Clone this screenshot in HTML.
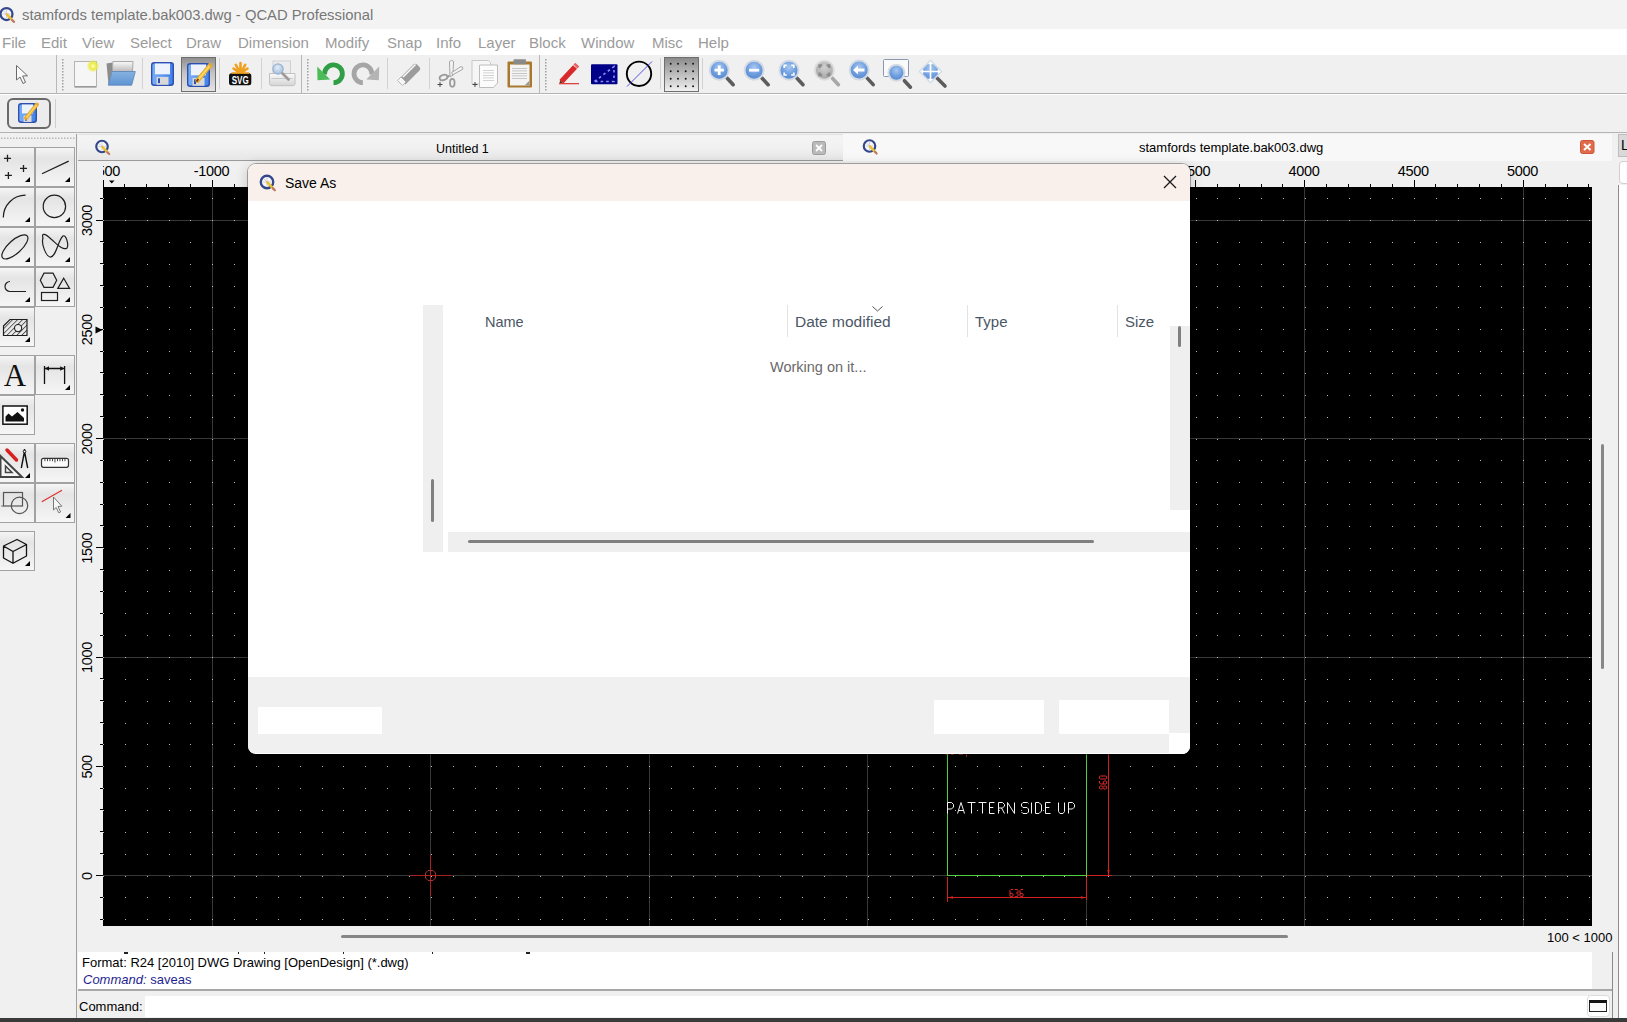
<!DOCTYPE html><html><head><meta charset="utf-8"><style>
*{margin:0;padding:0;box-sizing:border-box}
html,body{width:1627px;height:1022px;overflow:hidden;background:#f0f0f0;font-family:"Liberation Sans",sans-serif;position:relative}
.a{position:absolute}
.t{position:absolute;white-space:nowrap;line-height:1}
</style></head><body>

<div class="a" style="left:0;top:0;width:1627px;height:29px;background:#f3f3f3"></div>
<div class="t" style="left:22px;top:8px;font-size:14.8px;color:#777">stamfords template.bak003.dwg - QCAD Professional</div>
<div class="a" style="left:0;top:29px;width:1627px;height:26px;background:#fff"></div>
<div class="t" style="left:2px;top:35px;font-size:15px;color:#9b9b9b">File</div>
<div class="t" style="left:41px;top:35px;font-size:15px;color:#9b9b9b">Edit</div>
<div class="t" style="left:82px;top:35px;font-size:15px;color:#9b9b9b">View</div>
<div class="t" style="left:130px;top:35px;font-size:15px;color:#9b9b9b">Select</div>
<div class="t" style="left:186px;top:35px;font-size:15px;color:#9b9b9b">Draw</div>
<div class="t" style="left:238px;top:35px;font-size:15px;color:#9b9b9b">Dimension</div>
<div class="t" style="left:325px;top:35px;font-size:15px;color:#9b9b9b">Modify</div>
<div class="t" style="left:387px;top:35px;font-size:15px;color:#9b9b9b">Snap</div>
<div class="t" style="left:436px;top:35px;font-size:15px;color:#9b9b9b">Info</div>
<div class="t" style="left:478px;top:35px;font-size:15px;color:#9b9b9b">Layer</div>
<div class="t" style="left:529px;top:35px;font-size:15px;color:#9b9b9b">Block</div>
<div class="t" style="left:581px;top:35px;font-size:15px;color:#9b9b9b">Window</div>
<div class="t" style="left:652px;top:35px;font-size:15px;color:#9b9b9b">Misc</div>
<div class="t" style="left:698px;top:35px;font-size:15px;color:#9b9b9b">Help</div>
<div class="a" style="left:0;top:55px;width:1627px;height:39px;background:#f0f0f0;border-bottom:1px solid #b4b4b4"></div>
<div class="a" style="left:0;top:94px;width:1627px;height:39px;background:#f0f0f0;border-top:1px solid #fff;border-bottom:1px solid #b4b4b4"></div>
<svg width="1000" height="80" viewBox="0 54 1000 80" style="position:absolute;left:0;top:54px"><defs><linearGradient id="pressed" x1="0" y1="0" x2="0" y2="1"><stop offset="0" stop-color="#8e8e8e"/><stop offset="0.45" stop-color="#c4c4c4"/><stop offset="1" stop-color="#e4e4e4"/></linearGradient><radialGradient id="glass" cx="0.5" cy="0.35" r="0.6"><stop offset="0" stop-color="#a9c8f0"/><stop offset="0.6" stop-color="#6f9fe0"/><stop offset="1" stop-color="#5a8ad0"/></radialGradient><radialGradient id="glassg" cx="0.5" cy="0.35" r="0.6"><stop offset="0" stop-color="#d0d0d0"/><stop offset="1" stop-color="#a8a8a8"/></radialGradient><radialGradient id="glow" cx="0.5" cy="0.5" r="0.5"><stop offset="0" stop-color="#ffffc0"/><stop offset="0.5" stop-color="#eaea40"/><stop offset="1" stop-color="#eaea40" stop-opacity="0"/></radialGradient><linearGradient id="floppy" x1="0" y1="0" x2="1" y2="0"><stop offset="0" stop-color="#7ab0f8"/><stop offset="1" stop-color="#3f7fe8"/></linearGradient><linearGradient id="paperg" x1="0" y1="0" x2="0" y2="1"><stop offset="0" stop-color="#fafafa"/><stop offset="1" stop-color="#b8b8b8"/></linearGradient><linearGradient id="folderg" x1="0" y1="0" x2="0" y2="1"><stop offset="0" stop-color="#86b2e0"/><stop offset="1" stop-color="#5f94d4"/></linearGradient><linearGradient id="printg" x1="0" y1="0" x2="0" y2="1"><stop offset="0" stop-color="#fafafa"/><stop offset="1" stop-color="#d4d4d4"/></linearGradient><radialGradient id="glassp" cx="0.45" cy="0.35" r="0.6"><stop offset="0" stop-color="#e4eefa"/><stop offset="1" stop-color="#a8c0dc"/></radialGradient><linearGradient id="gridg" x1="0" y1="0" x2="0" y2="1"><stop offset="0" stop-color="#8a8a8a"/><stop offset="1" stop-color="#f2f2f2"/></linearGradient></defs><rect x="142" y="58" width="1" height="31" fill="#d2d2d2"/><rect x="219" y="58" width="1" height="31" fill="#d2d2d2"/><rect x="261" y="58" width="1" height="31" fill="#d2d2d2"/><rect x="387" y="58" width="1" height="31" fill="#d2d2d2"/><rect x="429" y="58" width="1" height="31" fill="#d2d2d2"/><rect x="660" y="58" width="1" height="31" fill="#d2d2d2"/><rect x="702" y="58" width="1" height="31" fill="#d2d2d2"/><rect x="56" y="55" width="1" height="38" fill="#b8b8b8"/><rect x="301" y="55" width="1" height="38" fill="#b8b8b8"/><rect x="539" y="55" width="1" height="38" fill="#b8b8b8"/><rect x="62" y="59" width="1.5" height="1.5" fill="#a0a0a0"/><rect x="62" y="62" width="1.5" height="1.5" fill="#a0a0a0"/><rect x="62" y="65" width="1.5" height="1.5" fill="#a0a0a0"/><rect x="62" y="68" width="1.5" height="1.5" fill="#a0a0a0"/><rect x="62" y="71" width="1.5" height="1.5" fill="#a0a0a0"/><rect x="62" y="74" width="1.5" height="1.5" fill="#a0a0a0"/><rect x="62" y="77" width="1.5" height="1.5" fill="#a0a0a0"/><rect x="62" y="80" width="1.5" height="1.5" fill="#a0a0a0"/><rect x="62" y="83" width="1.5" height="1.5" fill="#a0a0a0"/><rect x="62" y="86" width="1.5" height="1.5" fill="#a0a0a0"/><rect x="62" y="89" width="1.5" height="1.5" fill="#a0a0a0"/><rect x="307" y="59" width="1.5" height="1.5" fill="#a0a0a0"/><rect x="307" y="62" width="1.5" height="1.5" fill="#a0a0a0"/><rect x="307" y="65" width="1.5" height="1.5" fill="#a0a0a0"/><rect x="307" y="68" width="1.5" height="1.5" fill="#a0a0a0"/><rect x="307" y="71" width="1.5" height="1.5" fill="#a0a0a0"/><rect x="307" y="74" width="1.5" height="1.5" fill="#a0a0a0"/><rect x="307" y="77" width="1.5" height="1.5" fill="#a0a0a0"/><rect x="307" y="80" width="1.5" height="1.5" fill="#a0a0a0"/><rect x="307" y="83" width="1.5" height="1.5" fill="#a0a0a0"/><rect x="307" y="86" width="1.5" height="1.5" fill="#a0a0a0"/><rect x="307" y="89" width="1.5" height="1.5" fill="#a0a0a0"/><rect x="545" y="59" width="1.5" height="1.5" fill="#a0a0a0"/><rect x="545" y="62" width="1.5" height="1.5" fill="#a0a0a0"/><rect x="545" y="65" width="1.5" height="1.5" fill="#a0a0a0"/><rect x="545" y="68" width="1.5" height="1.5" fill="#a0a0a0"/><rect x="545" y="71" width="1.5" height="1.5" fill="#a0a0a0"/><rect x="545" y="74" width="1.5" height="1.5" fill="#a0a0a0"/><rect x="545" y="77" width="1.5" height="1.5" fill="#a0a0a0"/><rect x="545" y="80" width="1.5" height="1.5" fill="#a0a0a0"/><rect x="545" y="83" width="1.5" height="1.5" fill="#a0a0a0"/><rect x="545" y="86" width="1.5" height="1.5" fill="#a0a0a0"/><rect x="545" y="89" width="1.5" height="1.5" fill="#a0a0a0"/><rect x="55" y="99" width="1" height="29" fill="#d0d0d0"/><path d="M16.5 65.5L16.5 80L20 77L23 83.5L25.5 82.3L22.6 76L27.5 75.8Z" fill="#fafafa" stroke="#6a6a6a" stroke-width="1" stroke-linejoin="round"/><rect x="74.5" y="61.5" width="22" height="25.5" fill="#f6f6f6" stroke="#b4b4b4" stroke-width="1"/><rect x="75" y="86" width="21" height="1.5" fill="#9a9a9a"/><circle cx="93" cy="66" r="6.5" fill="url(#glow)"/><path d="M106.5 63.5L112.5 62.5L112 71.5L108.5 85Z" fill="#8c8c8c"/><path d="M112.8 61.5L133 61.5L132.5 72L112.5 72Z" fill="url(#paperg)" stroke="#a0a0a0" stroke-width="0.9"/><path d="M112 71.5L135.3 71.5L131.7 85.2L108.3 85.2Z" fill="url(#folderg)" stroke="#5c84b8" stroke-width="0.8"/><rect x="151.7" y="62.7" width="21.6" height="22.6" rx="2.5" fill="url(#floppy)" stroke="#2f4fb0" stroke-width="1.4"/><rect x="155" y="63.5" width="15" height="10.8" fill="#eef3fb"/><rect x="156.5" y="76.9" width="12" height="7.9" fill="#d8d8d8"/><rect x="158" y="78.3" width="2" height="4.8" fill="#2f4fb0"/><rect x="181.5" y="57.5" width="34" height="34" fill="url(#pressed)" stroke="#6e6e6e" stroke-width="1"/><rect x="187.7" y="63.7" width="21.6" height="22.6" rx="2.5" fill="url(#floppy)" stroke="#2f4fb0" stroke-width="1.4"/><rect x="191" y="64.5" width="15" height="10.8" fill="#eef3fb"/><rect x="192.5" y="77.9" width="12" height="7.9" fill="#d8d8d8"/><rect x="194" y="79.3" width="2" height="4.8" fill="#2f4fb0"/><path d="M197.5 80.5L210 65.5" stroke="#e8a830" stroke-width="4.5" stroke-linecap="round"/><path d="M198 80L209.5 66" stroke="#f8d860" stroke-width="2"/><path d="M196.5 81.5L198.5 79" stroke="#603010" stroke-width="1.5"/><path d="M240.5 73.5L233.5 68.5M240.5 73.5L235.8 64.8M240.5 73.5V63M240.5 73.5L245.2 64.8M240.5 73.5L247.5 68.5" stroke="#f0a020" stroke-width="2.6" stroke-linecap="round"/><rect x="229" y="73.3" width="22.3" height="12" rx="2.5" fill="#111"/><rect x="231.5" y="72.2" width="17.5" height="1.6" fill="#f0a020"/><text x="240.2" y="84" font-family="Liberation Sans" font-weight="bold" font-size="11" fill="#fff" text-anchor="middle" textLength="17" lengthAdjust="spacingAndGlyphs">SVG</text><rect x="273" y="61" width="17.5" height="13" fill="#ececec" stroke="#d0d0d0"/><path d="M269.5 73.5h25.5v10c0 1.5-1 2.2-2.5 2.2h-20.5c-1.5 0-2.5-.7-2.5-2.2z" fill="url(#printg)" stroke="#c0c0c0" stroke-width="1"/><rect x="271.5" y="78" width="21" height="1" fill="#c8c8c8"/><path d="M282 73L288.5 79.5" stroke="#a09a9a" stroke-width="2.8" stroke-linecap="round"/><circle cx="278" cy="69" r="5.2" fill="url(#glassp)" stroke="#9ab4d0" stroke-width="1.2"/><path d="M322.2 74.5A11.3 11.3 0 1 1 333.5 85.1L333.5 80.3A6.5 6.5 0 1 0 327 74.5Z" fill="#2f9e44"/><path d="M317.2 66.5L317.5 80.2L330.2 79.6Z" fill="#4cbb58"/><g transform="translate(696.4 0) scale(-1 1)"><path d="M322.2 74.5A11.3 11.3 0 1 1 333.5 85.1L333.5 80.3A6.5 6.5 0 1 0 327 74.5Z" fill="#a6a6a6"/><path d="M317.2 66.5L317.5 80.2L330.2 79.6Z" fill="#b4b4b4"/></g><path d="M399.5 78.5L413.5 64.5A2.5 2.5 0 0 1 417 64.5L419.5 67A2.5 2.5 0 0 1 419.5 70.5L405.5 84.5Z" fill="#9c9c9c"/><path d="M403 77L415.5 64.5" stroke="#fafafa" stroke-width="1.6"/><path d="M397.5 80.5L401 77L406 82L402.5 85.5Z" fill="#f6f6f6" stroke="#a8a8a8" stroke-width="0.8"/><path d="M449.5 61.5Q451.5 59.5 453.6 61.3L452.8 75.5L450 76.5Z" fill="#f4f4f4" stroke="#9c9c9c" stroke-width="0.9"/><path d="M461 66.5Q463.8 66.8 462.6 69.4L452.6 74.8L451.6 72.6Z" fill="#f4f4f4" stroke="#9c9c9c" stroke-width="0.9"/><path d="M449.5 75.5L447 77.5" stroke="#9a9a9a" stroke-width="1.8"/><ellipse cx="443.5" cy="77.5" rx="4" ry="2.6" transform="rotate(-20 443.5 77.5)" fill="none" stroke="#9a9a9a" stroke-width="1.8"/><ellipse cx="452.3" cy="82.8" rx="2.3" ry="4" fill="none" stroke="#9a9a9a" stroke-width="1.8"/><path d="M437.5 84.5h5M440 82v5" stroke="#444" stroke-width="1"/><path d="M472 60.5h16.5l2 2V84H472Z" fill="#f6f6f6" stroke="#c8c8c8"/><path d="M479.5 65h18v18l-4 4.5h-14Z" fill="#fcfcfc" stroke="#bcbcbc"/><rect x="483" y="70" width="11" height="0.8" fill="#c8c8c8"/><rect x="483" y="72.5" width="11" height="0.8" fill="#c8c8c8"/><rect x="483" y="75" width="11" height="0.8" fill="#c8c8c8"/><rect x="483" y="77.5" width="11" height="0.8" fill="#c8c8c8"/><rect x="483" y="80" width="11" height="0.8" fill="#c8c8c8"/><path d="M472.5 84.5h5M475 82v5" stroke="#444" stroke-width="1"/><rect x="507.5" y="61.5" width="24.5" height="26" rx="1" fill="#a8782c"/><rect x="510" y="64.5" width="19.5" height="21" fill="#f4f4f4"/><rect x="513.5" y="59.3" width="12.5" height="5" rx="1" fill="#8a8a8a"/><rect x="512" y="68" width="15" height="0.8" fill="#bcbcbc"/><rect x="512" y="70.5" width="15" height="0.8" fill="#bcbcbc"/><rect x="512" y="73" width="15" height="0.8" fill="#bcbcbc"/><rect x="512" y="75.5" width="15" height="0.8" fill="#bcbcbc"/><rect x="512" y="78" width="15" height="0.8" fill="#bcbcbc"/><path d="M529.5 80.5v5h-5z" fill="#9a9a9a"/><path d="M561.5 81.5L575 67" stroke="#d82a2a" stroke-width="5.5" stroke-linecap="butt"/><path d="M575.5 66.5L577.2 64.7" stroke="#e86060" stroke-width="5.5"/><path d="M559.5 83.5L560 80L563 82.8Z" fill="#703020"/><rect x="559" y="83" width="20" height="1.3" fill="#e04040"/><rect x="591" y="64.3" width="26.5" height="20" rx="1" fill="#000088"/><path d="M594.5 81.5L614 66.5V81.5Z" fill="none" stroke="#9090ec" stroke-width="1.6" stroke-dasharray="2.6 3"/><circle cx="639" cy="73.8" r="12.2" fill="none" stroke="#000" stroke-width="1.9"/><path d="M627 86.5L652 61.5" stroke="#4040e0" stroke-width="0.9"/><rect x="664.5" y="57.5" width="34" height="34" fill="url(#gridg)" stroke="#6e6e6e" stroke-width="1"/><circle cx="670.7" cy="63.8" r="0.95" fill="#111"/><circle cx="670.7" cy="71.2" r="0.95" fill="#111"/><circle cx="670.7" cy="78.8" r="0.95" fill="#111"/><circle cx="670.7" cy="86.3" r="0.95" fill="#111"/><circle cx="678" cy="63.8" r="0.95" fill="#111"/><circle cx="678" cy="71.2" r="0.95" fill="#111"/><circle cx="678" cy="78.8" r="0.95" fill="#111"/><circle cx="678" cy="86.3" r="0.95" fill="#111"/><circle cx="685.7" cy="63.8" r="0.95" fill="#111"/><circle cx="685.7" cy="71.2" r="0.95" fill="#111"/><circle cx="685.7" cy="78.8" r="0.95" fill="#111"/><circle cx="685.7" cy="86.3" r="0.95" fill="#111"/><circle cx="693.1" cy="63.8" r="0.95" fill="#111"/><circle cx="693.1" cy="71.2" r="0.95" fill="#111"/><circle cx="693.1" cy="78.8" r="0.95" fill="#111"/><circle cx="693.1" cy="86.3" r="0.95" fill="#111"/><path d="M727.2 78.2L733.2 84.7" stroke="#5c5c5c" stroke-width="3.6" stroke-linecap="round"/><circle cx="719.2" cy="70.2" r="9.5" fill="url(#glass)" stroke="#d2dae4" stroke-width="2"/><path d="M714.5 70.2h9.4M719.2 65.5v9.4" stroke="#fff" stroke-width="2.8"/><path d="M762.1 78.2L768.1 84.7" stroke="#5c5c5c" stroke-width="3.6" stroke-linecap="round"/><circle cx="754.1" cy="70.2" r="9.5" fill="url(#glass)" stroke="#d2dae4" stroke-width="2"/><path d="M749 70.2h10.2" stroke="#fff" stroke-width="2.8"/><path d="M797 78.2L803 84.7" stroke="#5c5c5c" stroke-width="3.6" stroke-linecap="round"/><circle cx="789" cy="70.2" r="9.5" fill="url(#glass)" stroke="#d2dae4" stroke-width="2"/><path d="M784.2 68.0V65.4H786.8000000000001M791.1999999999999 65.4H793.8V68.0M784.2 72.4V75.0H786.8000000000001M791.1999999999999 75.0H793.8V72.4" stroke="#fff" stroke-width="1.7" fill="none"/><path d="M832.4 78.2L838.4 84.7" stroke="#a8a8a8" stroke-width="3.6" stroke-linecap="round"/><circle cx="824.4" cy="70.2" r="9.5" fill="url(#glassg)" stroke="#dcdcdc" stroke-width="2"/><path d="M819.6 68.0V65.4H822.2M826.5999999999999 65.4H829.1999999999999V68.0M819.6 72.4V75.0H822.2M826.5999999999999 75.0H829.1999999999999V72.4" stroke="#8c8c8c" stroke-width="2.4" fill="none"/><path d="M867.2 78.1L873.2 84.6" stroke="#5c5c5c" stroke-width="3.6" stroke-linecap="round"/><circle cx="859.2" cy="70.1" r="9.5" fill="url(#glass)" stroke="#d2dae4" stroke-width="2"/><path d="M853 70.1l5-4.5v3h6.5v3h-6.5v3z" fill="#fff"/><rect x="883.5" y="59.5" width="25" height="17" rx="1" fill="#fafafa" stroke="#8c98b0" stroke-width="1"/><path d="M904.4 80.7L910.4 87.2" stroke="#5c5c5c" stroke-width="3.6" stroke-linecap="round"/><circle cx="896.4" cy="72.7" r="8" fill="url(#glass)" stroke="#d2dae4" stroke-width="2"/><path d="M937 78L945 86" stroke="#5c5c5c" stroke-width="3.6" stroke-linecap="round"/><path d="M930.5 60.5L941.5 71.5L930.5 82.5L919.5 71.5Z" fill="url(#glass)" stroke="#d2dae4" stroke-width="1.5" stroke-linejoin="round"/><path d="M930.5 63v17M922 71.5h17" stroke="#fff" stroke-width="1.6"/><path d="M930.5 61l-2.8 3.2h5.6zM930.5 82l-2.8-3.2h5.6zM920 71.5l3.2-2.8v5.6zM941 71.5l-3.2-2.8v5.6z" fill="#fff"/><rect x="8" y="99" width="42" height="29" rx="5" fill="#ececec" stroke="#6a6a6a" stroke-width="2"/><rect x="18.7" y="103.7" width="17.6" height="18.6" rx="2.5" fill="url(#floppy)" stroke="#2f4fb0" stroke-width="1.4"/><rect x="22" y="104.5" width="11" height="9.0" fill="#eef3fb"/><rect x="23.5" y="115.4" width="8" height="6.6" fill="#d8d8d8"/><rect x="25" y="116.6" width="2" height="4.0" fill="#2f4fb0"/><path d="M26 118L37 104.5" stroke="#e8a830" stroke-width="3.8" stroke-linecap="round"/><path d="M26.5 117.5L36.5 105" stroke="#f8d860" stroke-width="1.6"/></svg>
<svg width="77" height="450" viewBox="0 134 77 450" style="position:absolute;left:0;top:134px"><defs><linearGradient id="btn" x1="0" y1="0" x2="0" y2="1"><stop offset="0" stop-color="#f6f6f6"/><stop offset="0.28" stop-color="#e4e4e4"/><stop offset="0.6" stop-color="#ececec"/><stop offset="1" stop-color="#f6f6f6"/></linearGradient><pattern id="hatch" width="3.5" height="3.5" patternUnits="userSpaceOnUse" patternTransform="rotate(45)"><rect width="0.9" height="3.5" fill="#555"/></pattern></defs><rect x="1" y="137.5" width="1.5" height="1.5" fill="#b8b8b8"/><rect x="4" y="137.5" width="1.5" height="1.5" fill="#b8b8b8"/><rect x="7" y="137.5" width="1.5" height="1.5" fill="#b8b8b8"/><rect x="10" y="137.5" width="1.5" height="1.5" fill="#b8b8b8"/><rect x="13" y="137.5" width="1.5" height="1.5" fill="#b8b8b8"/><rect x="16" y="137.5" width="1.5" height="1.5" fill="#b8b8b8"/><rect x="19" y="137.5" width="1.5" height="1.5" fill="#b8b8b8"/><rect x="22" y="137.5" width="1.5" height="1.5" fill="#b8b8b8"/><rect x="25" y="137.5" width="1.5" height="1.5" fill="#b8b8b8"/><rect x="28" y="137.5" width="1.5" height="1.5" fill="#b8b8b8"/><rect x="31" y="137.5" width="1.5" height="1.5" fill="#b8b8b8"/><rect x="34" y="137.5" width="1.5" height="1.5" fill="#b8b8b8"/><rect x="37" y="137.5" width="1.5" height="1.5" fill="#b8b8b8"/><rect x="40" y="137.5" width="1.5" height="1.5" fill="#b8b8b8"/><rect x="43" y="137.5" width="1.5" height="1.5" fill="#b8b8b8"/><rect x="46" y="137.5" width="1.5" height="1.5" fill="#b8b8b8"/><rect x="49" y="137.5" width="1.5" height="1.5" fill="#b8b8b8"/><rect x="52" y="137.5" width="1.5" height="1.5" fill="#b8b8b8"/><rect x="55" y="137.5" width="1.5" height="1.5" fill="#b8b8b8"/><rect x="58" y="137.5" width="1.5" height="1.5" fill="#b8b8b8"/><rect x="61" y="137.5" width="1.5" height="1.5" fill="#b8b8b8"/><rect x="64" y="137.5" width="1.5" height="1.5" fill="#b8b8b8"/><rect x="67" y="137.5" width="1.5" height="1.5" fill="#b8b8b8"/><rect x="70" y="137.5" width="1.5" height="1.5" fill="#b8b8b8"/><rect x="73" y="137.5" width="1.5" height="1.5" fill="#b8b8b8"/><rect x="-0.5" y="147.5" width="35" height="39" fill="url(#btn)" stroke="#a2a2a2" stroke-width="1"/><rect x="35.5" y="147.5" width="39" height="39" fill="url(#btn)" stroke="#a2a2a2" stroke-width="1"/><rect x="-0.5" y="187.5" width="35" height="39" fill="url(#btn)" stroke="#a2a2a2" stroke-width="1"/><rect x="35.5" y="187.5" width="39" height="39" fill="url(#btn)" stroke="#a2a2a2" stroke-width="1"/><rect x="-0.5" y="227.5" width="35" height="39" fill="url(#btn)" stroke="#a2a2a2" stroke-width="1"/><rect x="35.5" y="227.5" width="39" height="39" fill="url(#btn)" stroke="#a2a2a2" stroke-width="1"/><rect x="-0.5" y="267.5" width="35" height="39" fill="url(#btn)" stroke="#a2a2a2" stroke-width="1"/><rect x="35.5" y="267.5" width="39" height="39" fill="url(#btn)" stroke="#a2a2a2" stroke-width="1"/><rect x="-0.5" y="307.5" width="35" height="39" fill="url(#btn)" stroke="#a2a2a2" stroke-width="1"/><rect x="-0.5" y="355.5" width="35" height="39" fill="url(#btn)" stroke="#a2a2a2" stroke-width="1"/><rect x="35.5" y="355.5" width="39" height="39" fill="url(#btn)" stroke="#a2a2a2" stroke-width="1"/><rect x="-0.5" y="395.5" width="35" height="39" fill="url(#btn)" stroke="#a2a2a2" stroke-width="1"/><rect x="-0.5" y="443.5" width="35" height="39" fill="url(#btn)" stroke="#a2a2a2" stroke-width="1"/><rect x="35.5" y="443.5" width="39" height="39" fill="url(#btn)" stroke="#a2a2a2" stroke-width="1"/><rect x="-0.5" y="483.5" width="35" height="39" fill="url(#btn)" stroke="#a2a2a2" stroke-width="1"/><rect x="35.5" y="483.5" width="39" height="39" fill="url(#btn)" stroke="#a2a2a2" stroke-width="1"/><rect x="-0.5" y="531.5" width="35" height="39" fill="url(#btn)" stroke="#a2a2a2" stroke-width="1"/><path d="M4.0 158.3h7M7.5 154.8v7" stroke="#1e1e1e" stroke-width="1.3"/><path d="M20.0 168.4h7M23.5 164.9v7" stroke="#1e1e1e" stroke-width="1.3"/><path d="M4.9 175.4h7M8.4 171.9v7" stroke="#1e1e1e" stroke-width="1.3"/><path d="M30 177V182H25Z" fill="#000"/><path d="M42 173.7L68.7 161.1" stroke="#1e1e1e" stroke-width="1.2"/><path d="M70 177V182H65Z" fill="#000"/><path d="M3.3 217.5A22.3 22.3 0 0 1 25.6 195.2" fill="none" stroke="#1e1e1e" stroke-width="1.2"/><path d="M30 217V222H25Z" fill="#000"/><circle cx="54.4" cy="206.4" r="11.2" fill="none" stroke="#1e1e1e" stroke-width="1.2"/><path d="M70 217V222H65Z" fill="#000"/><ellipse cx="14.9" cy="246.9" rx="16.5" ry="6.5" transform="rotate(-42 14.9 246.9)" fill="none" stroke="#1e1e1e" stroke-width="1.2"/><path d="M30 257V262H25Z" fill="#000"/><path d="M43 238C41 232 46 234 51 239C57 244 63 251 67 248C69 245 66 234 63 236C58 240 56 258 50 257C46 256 41 244 43 238Z" fill="none" stroke="#1e1e1e" stroke-width="1.2"/><path d="M70 257V262H65Z" fill="#000"/><path d="M10 281.5A5 5 0 0 0 10 291.5H26" fill="none" stroke="#1e1e1e" stroke-width="1.2"/><path d="M30 297V302H25Z" fill="#000"/><path d="M40.3 280.3L44 273.2H53L56.7 280.3L53 287.4H44Z" fill="none" stroke="#1e1e1e" stroke-width="1.2"/><path d="M63.7 278.2L69.6 288.4H57.8Z" fill="none" stroke="#1e1e1e" stroke-width="1.2"/><rect x="41.5" y="292.5" width="16" height="8" fill="none" stroke="#1e1e1e" stroke-width="1.2"/><path d="M70 297V302H65Z" fill="#000"/><path d="M3.5 326L10 319.5H27V335.5H3.5Z" fill="url(#hatch)" stroke="#1e1e1e" stroke-width="1.2"/><circle cx="18.1" cy="328.1" r="3.6" fill="#ececec" stroke="#1e1e1e" stroke-width="1.1"/><path d="M30 337V342H25Z" fill="#000"/><text x="15" y="386" font-family="Liberation Serif" font-size="31" text-anchor="middle" fill="#111">A</text><path d="M44.5 366v18M64.6 366v18M45 368.5h19" stroke="#111" stroke-width="1.3"/><path d="M45 368.5l4-2.2v4.4zM64.2 368.5l-4-2.2v4.4z" fill="#111"/><path d="M70 385V390H65Z" fill="#000"/><rect x="2.9" y="406" width="24.3" height="18.2" fill="#fff" stroke="#111" stroke-width="1.5"/><path d="M5.5 421.5V416.5L8.5 413.5L12 416.5L17.5 412L24 418V421.5Z" fill="#111"/><circle cx="22.5" cy="410" r="1.7" fill="#111"/><path d="M0.5 456L22 477H0.5Z" fill="#f4f4f4" stroke="#444" stroke-width="2"/><path d="M5.5 466L12 472.5H5.5Z" fill="none" stroke="#444" stroke-width="1.5"/><path d="M7 450L16.5 460" stroke="#d82020" stroke-width="3.5" stroke-linecap="round"/><path d="M24.5 449v2M24.5 451.5L21.3 468M24.5 451.5L27.7 468" stroke="#111" stroke-width="1.4" fill="none"/><circle cx="24.5" cy="451.5" r="1.3" fill="#fff" stroke="#111" stroke-width="1"/><path d="M30 473V478H25Z" fill="#000"/><rect x="41.5" y="458.3" width="27" height="9" rx="2" fill="#fafafa" stroke="#333" stroke-width="1.2"/><rect x="44.5" y="459" width="0.9" height="2.2" fill="#333"/><rect x="47" y="459" width="0.9" height="2.2" fill="#333"/><rect x="49.5" y="459" width="0.9" height="2.2" fill="#333"/><rect x="52" y="459" width="0.9" height="2.2" fill="#333"/><rect x="54.5" y="459" width="0.9" height="3.5" fill="#333"/><rect x="57" y="459" width="0.9" height="2.2" fill="#333"/><rect x="59.5" y="459" width="0.9" height="2.2" fill="#333"/><rect x="62" y="459" width="0.9" height="2.2" fill="#333"/><rect x="64.5" y="459" width="0.9" height="2.2" fill="#333"/><rect x="3.5" y="492.5" width="19" height="13.5" fill="none" stroke="#555" stroke-width="1.2"/><circle cx="19.5" cy="505.4" r="8.2" fill="none" stroke="#555" stroke-width="1.2"/><path d="M1 506h3" stroke="#777" stroke-width="1"/><path d="M41.8 501.7L62 490.3" stroke="#e03030" stroke-width="1.2"/><path d="M53.5 497V510L56.2 507.5L58.8 512.8L60.6 511.9L58 506.5L61.8 506.2Z" fill="#f8f8f8" stroke="#777" stroke-width="1"/><path d="M70.5 513V518H65.5Z" fill="#000"/><path d="M3.5 546L17 539.5L26.5 544.5L13 551.5ZM3.5 546V558L13 563.3V551.5M13 563.3L26.5 556V544.5" fill="none" stroke="#111" stroke-width="1.3" stroke-linejoin="round"/><path d="M30 561V566H25Z" fill="#000"/></svg>
<div class="a" style="left:76px;top:134px;width:1px;height:884px;background:#a0a0a0"></div>
<div class="a" style="left:78px;top:134px;width:766px;height:27px;background:linear-gradient(#f4f4f4,#f1f1f1 50%,#e6e6e6);border-top:1px solid #e0e0e0;border-right:1px solid #d0d0d0;border-bottom:1px solid #9a9a9a"></div>
<div class="a" style="left:843px;top:134px;width:769px;height:27px;background:#f8f8f8"></div>
<div class="t" style="left:436px;top:143px;font-size:12.5px;color:#000">Untitled 1</div>
<div class="t" style="left:1139px;top:141px;font-size:13px;color:#000">stamfords template.bak003.dwg</div>
<svg width="1489" height="739" viewBox="103 187 1489 739" style="position:absolute;left:103px;top:187px;display:block" shape-rendering="crispEdges"><rect x="103" y="187" width="1489" height="739" fill="#000"/><path d="M212 187h1V926h-1zM430 187h1V926h-1zM649 187h1V926h-1zM867 187h1V926h-1zM1086 187h1V926h-1zM1304 187h1V926h-1zM1523 187h1V926h-1zM103 875H1592v1H103zM103 657H1592v1H103zM103 438H1592v1H103zM103 220H1592v1H103z" fill="#383838"/><path d="M103 919h1v1h-1zM103 897h1v1h-1zM103 876h1v1h-1zM103 854h1v1h-1zM103 832h1v1h-1zM103 810h1v1h-1zM103 788h1v1h-1zM103 766h1v1h-1zM103 744h1v1h-1zM103 723h1v1h-1zM103 701h1v1h-1zM103 679h1v1h-1zM103 657h1v1h-1zM103 635h1v1h-1zM103 613h1v1h-1zM103 591h1v1h-1zM103 570h1v1h-1zM103 548h1v1h-1zM103 526h1v1h-1zM103 504h1v1h-1zM103 482h1v1h-1zM103 460h1v1h-1zM103 439h1v1h-1zM103 417h1v1h-1zM103 395h1v1h-1zM103 373h1v1h-1zM103 351h1v1h-1zM103 329h1v1h-1zM103 307h1v1h-1zM103 286h1v1h-1zM103 264h1v1h-1zM103 242h1v1h-1zM103 220h1v1h-1zM103 198h1v1h-1zM125 919h1v1h-1zM125 897h1v1h-1zM125 876h1v1h-1zM125 854h1v1h-1zM125 832h1v1h-1zM125 810h1v1h-1zM125 788h1v1h-1zM125 766h1v1h-1zM125 744h1v1h-1zM125 723h1v1h-1zM125 701h1v1h-1zM125 679h1v1h-1zM125 657h1v1h-1zM125 635h1v1h-1zM125 613h1v1h-1zM125 591h1v1h-1zM125 570h1v1h-1zM125 548h1v1h-1zM125 526h1v1h-1zM125 504h1v1h-1zM125 482h1v1h-1zM125 460h1v1h-1zM125 439h1v1h-1zM125 417h1v1h-1zM125 395h1v1h-1zM125 373h1v1h-1zM125 351h1v1h-1zM125 329h1v1h-1zM125 307h1v1h-1zM125 286h1v1h-1zM125 264h1v1h-1zM125 242h1v1h-1zM125 220h1v1h-1zM125 198h1v1h-1zM147 919h1v1h-1zM147 897h1v1h-1zM147 876h1v1h-1zM147 854h1v1h-1zM147 832h1v1h-1zM147 810h1v1h-1zM147 788h1v1h-1zM147 766h1v1h-1zM147 744h1v1h-1zM147 723h1v1h-1zM147 701h1v1h-1zM147 679h1v1h-1zM147 657h1v1h-1zM147 635h1v1h-1zM147 613h1v1h-1zM147 591h1v1h-1zM147 570h1v1h-1zM147 548h1v1h-1zM147 526h1v1h-1zM147 504h1v1h-1zM147 482h1v1h-1zM147 460h1v1h-1zM147 439h1v1h-1zM147 417h1v1h-1zM147 395h1v1h-1zM147 373h1v1h-1zM147 351h1v1h-1zM147 329h1v1h-1zM147 307h1v1h-1zM147 286h1v1h-1zM147 264h1v1h-1zM147 242h1v1h-1zM147 220h1v1h-1zM147 198h1v1h-1zM169 919h1v1h-1zM169 897h1v1h-1zM169 876h1v1h-1zM169 854h1v1h-1zM169 832h1v1h-1zM169 810h1v1h-1zM169 788h1v1h-1zM169 766h1v1h-1zM169 744h1v1h-1zM169 723h1v1h-1zM169 701h1v1h-1zM169 679h1v1h-1zM169 657h1v1h-1zM169 635h1v1h-1zM169 613h1v1h-1zM169 591h1v1h-1zM169 570h1v1h-1zM169 548h1v1h-1zM169 526h1v1h-1zM169 504h1v1h-1zM169 482h1v1h-1zM169 460h1v1h-1zM169 439h1v1h-1zM169 417h1v1h-1zM169 395h1v1h-1zM169 373h1v1h-1zM169 351h1v1h-1zM169 329h1v1h-1zM169 307h1v1h-1zM169 286h1v1h-1zM169 264h1v1h-1zM169 242h1v1h-1zM169 220h1v1h-1zM169 198h1v1h-1zM190 919h1v1h-1zM190 897h1v1h-1zM190 876h1v1h-1zM190 854h1v1h-1zM190 832h1v1h-1zM190 810h1v1h-1zM190 788h1v1h-1zM190 766h1v1h-1zM190 744h1v1h-1zM190 723h1v1h-1zM190 701h1v1h-1zM190 679h1v1h-1zM190 657h1v1h-1zM190 635h1v1h-1zM190 613h1v1h-1zM190 591h1v1h-1zM190 570h1v1h-1zM190 548h1v1h-1zM190 526h1v1h-1zM190 504h1v1h-1zM190 482h1v1h-1zM190 460h1v1h-1zM190 439h1v1h-1zM190 417h1v1h-1zM190 395h1v1h-1zM190 373h1v1h-1zM190 351h1v1h-1zM190 329h1v1h-1zM190 307h1v1h-1zM190 286h1v1h-1zM190 264h1v1h-1zM190 242h1v1h-1zM190 220h1v1h-1zM190 198h1v1h-1zM212 919h1v1h-1zM212 897h1v1h-1zM212 876h1v1h-1zM212 854h1v1h-1zM212 832h1v1h-1zM212 810h1v1h-1zM212 788h1v1h-1zM212 766h1v1h-1zM212 744h1v1h-1zM212 723h1v1h-1zM212 701h1v1h-1zM212 679h1v1h-1zM212 657h1v1h-1zM212 635h1v1h-1zM212 613h1v1h-1zM212 591h1v1h-1zM212 570h1v1h-1zM212 548h1v1h-1zM212 526h1v1h-1zM212 504h1v1h-1zM212 482h1v1h-1zM212 460h1v1h-1zM212 439h1v1h-1zM212 417h1v1h-1zM212 395h1v1h-1zM212 373h1v1h-1zM212 351h1v1h-1zM212 329h1v1h-1zM212 307h1v1h-1zM212 286h1v1h-1zM212 264h1v1h-1zM212 242h1v1h-1zM212 220h1v1h-1zM212 198h1v1h-1zM234 919h1v1h-1zM234 897h1v1h-1zM234 876h1v1h-1zM234 854h1v1h-1zM234 832h1v1h-1zM234 810h1v1h-1zM234 788h1v1h-1zM234 766h1v1h-1zM234 744h1v1h-1zM234 723h1v1h-1zM234 701h1v1h-1zM234 679h1v1h-1zM234 657h1v1h-1zM234 635h1v1h-1zM234 613h1v1h-1zM234 591h1v1h-1zM234 570h1v1h-1zM234 548h1v1h-1zM234 526h1v1h-1zM234 504h1v1h-1zM234 482h1v1h-1zM234 460h1v1h-1zM234 439h1v1h-1zM234 417h1v1h-1zM234 395h1v1h-1zM234 373h1v1h-1zM234 351h1v1h-1zM234 329h1v1h-1zM234 307h1v1h-1zM234 286h1v1h-1zM234 264h1v1h-1zM234 242h1v1h-1zM234 220h1v1h-1zM234 198h1v1h-1zM256 919h1v1h-1zM256 897h1v1h-1zM256 876h1v1h-1zM256 854h1v1h-1zM256 832h1v1h-1zM256 810h1v1h-1zM256 788h1v1h-1zM256 766h1v1h-1zM278 919h1v1h-1zM278 897h1v1h-1zM278 876h1v1h-1zM278 854h1v1h-1zM278 832h1v1h-1zM278 810h1v1h-1zM278 788h1v1h-1zM278 766h1v1h-1zM300 919h1v1h-1zM300 897h1v1h-1zM300 876h1v1h-1zM300 854h1v1h-1zM300 832h1v1h-1zM300 810h1v1h-1zM300 788h1v1h-1zM300 766h1v1h-1zM322 919h1v1h-1zM322 897h1v1h-1zM322 876h1v1h-1zM322 854h1v1h-1zM322 832h1v1h-1zM322 810h1v1h-1zM322 788h1v1h-1zM322 766h1v1h-1zM343 919h1v1h-1zM343 897h1v1h-1zM343 876h1v1h-1zM343 854h1v1h-1zM343 832h1v1h-1zM343 810h1v1h-1zM343 788h1v1h-1zM343 766h1v1h-1zM365 919h1v1h-1zM365 897h1v1h-1zM365 876h1v1h-1zM365 854h1v1h-1zM365 832h1v1h-1zM365 810h1v1h-1zM365 788h1v1h-1zM365 766h1v1h-1zM387 919h1v1h-1zM387 897h1v1h-1zM387 876h1v1h-1zM387 854h1v1h-1zM387 832h1v1h-1zM387 810h1v1h-1zM387 788h1v1h-1zM387 766h1v1h-1zM409 919h1v1h-1zM409 897h1v1h-1zM409 876h1v1h-1zM409 854h1v1h-1zM409 832h1v1h-1zM409 810h1v1h-1zM409 788h1v1h-1zM409 766h1v1h-1zM431 919h1v1h-1zM431 897h1v1h-1zM431 876h1v1h-1zM431 854h1v1h-1zM431 832h1v1h-1zM431 810h1v1h-1zM431 788h1v1h-1zM431 766h1v1h-1zM453 919h1v1h-1zM453 897h1v1h-1zM453 876h1v1h-1zM453 854h1v1h-1zM453 832h1v1h-1zM453 810h1v1h-1zM453 788h1v1h-1zM453 766h1v1h-1zM475 919h1v1h-1zM475 897h1v1h-1zM475 876h1v1h-1zM475 854h1v1h-1zM475 832h1v1h-1zM475 810h1v1h-1zM475 788h1v1h-1zM475 766h1v1h-1zM496 919h1v1h-1zM496 897h1v1h-1zM496 876h1v1h-1zM496 854h1v1h-1zM496 832h1v1h-1zM496 810h1v1h-1zM496 788h1v1h-1zM496 766h1v1h-1zM518 919h1v1h-1zM518 897h1v1h-1zM518 876h1v1h-1zM518 854h1v1h-1zM518 832h1v1h-1zM518 810h1v1h-1zM518 788h1v1h-1zM518 766h1v1h-1zM540 919h1v1h-1zM540 897h1v1h-1zM540 876h1v1h-1zM540 854h1v1h-1zM540 832h1v1h-1zM540 810h1v1h-1zM540 788h1v1h-1zM540 766h1v1h-1zM562 919h1v1h-1zM562 897h1v1h-1zM562 876h1v1h-1zM562 854h1v1h-1zM562 832h1v1h-1zM562 810h1v1h-1zM562 788h1v1h-1zM562 766h1v1h-1zM584 919h1v1h-1zM584 897h1v1h-1zM584 876h1v1h-1zM584 854h1v1h-1zM584 832h1v1h-1zM584 810h1v1h-1zM584 788h1v1h-1zM584 766h1v1h-1zM606 919h1v1h-1zM606 897h1v1h-1zM606 876h1v1h-1zM606 854h1v1h-1zM606 832h1v1h-1zM606 810h1v1h-1zM606 788h1v1h-1zM606 766h1v1h-1zM627 919h1v1h-1zM627 897h1v1h-1zM627 876h1v1h-1zM627 854h1v1h-1zM627 832h1v1h-1zM627 810h1v1h-1zM627 788h1v1h-1zM627 766h1v1h-1zM649 919h1v1h-1zM649 897h1v1h-1zM649 876h1v1h-1zM649 854h1v1h-1zM649 832h1v1h-1zM649 810h1v1h-1zM649 788h1v1h-1zM649 766h1v1h-1zM671 919h1v1h-1zM671 897h1v1h-1zM671 876h1v1h-1zM671 854h1v1h-1zM671 832h1v1h-1zM671 810h1v1h-1zM671 788h1v1h-1zM671 766h1v1h-1zM693 919h1v1h-1zM693 897h1v1h-1zM693 876h1v1h-1zM693 854h1v1h-1zM693 832h1v1h-1zM693 810h1v1h-1zM693 788h1v1h-1zM693 766h1v1h-1zM715 919h1v1h-1zM715 897h1v1h-1zM715 876h1v1h-1zM715 854h1v1h-1zM715 832h1v1h-1zM715 810h1v1h-1zM715 788h1v1h-1zM715 766h1v1h-1zM737 919h1v1h-1zM737 897h1v1h-1zM737 876h1v1h-1zM737 854h1v1h-1zM737 832h1v1h-1zM737 810h1v1h-1zM737 788h1v1h-1zM737 766h1v1h-1zM759 919h1v1h-1zM759 897h1v1h-1zM759 876h1v1h-1zM759 854h1v1h-1zM759 832h1v1h-1zM759 810h1v1h-1zM759 788h1v1h-1zM759 766h1v1h-1zM780 919h1v1h-1zM780 897h1v1h-1zM780 876h1v1h-1zM780 854h1v1h-1zM780 832h1v1h-1zM780 810h1v1h-1zM780 788h1v1h-1zM780 766h1v1h-1zM802 919h1v1h-1zM802 897h1v1h-1zM802 876h1v1h-1zM802 854h1v1h-1zM802 832h1v1h-1zM802 810h1v1h-1zM802 788h1v1h-1zM802 766h1v1h-1zM824 919h1v1h-1zM824 897h1v1h-1zM824 876h1v1h-1zM824 854h1v1h-1zM824 832h1v1h-1zM824 810h1v1h-1zM824 788h1v1h-1zM824 766h1v1h-1zM846 919h1v1h-1zM846 897h1v1h-1zM846 876h1v1h-1zM846 854h1v1h-1zM846 832h1v1h-1zM846 810h1v1h-1zM846 788h1v1h-1zM846 766h1v1h-1zM868 919h1v1h-1zM868 897h1v1h-1zM868 876h1v1h-1zM868 854h1v1h-1zM868 832h1v1h-1zM868 810h1v1h-1zM868 788h1v1h-1zM868 766h1v1h-1zM890 919h1v1h-1zM890 897h1v1h-1zM890 876h1v1h-1zM890 854h1v1h-1zM890 832h1v1h-1zM890 810h1v1h-1zM890 788h1v1h-1zM890 766h1v1h-1zM912 919h1v1h-1zM912 897h1v1h-1zM912 876h1v1h-1zM912 854h1v1h-1zM912 832h1v1h-1zM912 810h1v1h-1zM912 788h1v1h-1zM912 766h1v1h-1zM933 919h1v1h-1zM933 897h1v1h-1zM933 876h1v1h-1zM933 854h1v1h-1zM933 832h1v1h-1zM933 810h1v1h-1zM933 788h1v1h-1zM933 766h1v1h-1zM955 919h1v1h-1zM955 897h1v1h-1zM955 876h1v1h-1zM955 854h1v1h-1zM955 832h1v1h-1zM955 810h1v1h-1zM955 788h1v1h-1zM955 766h1v1h-1zM977 919h1v1h-1zM977 897h1v1h-1zM977 876h1v1h-1zM977 854h1v1h-1zM977 832h1v1h-1zM977 810h1v1h-1zM977 788h1v1h-1zM977 766h1v1h-1zM999 919h1v1h-1zM999 897h1v1h-1zM999 876h1v1h-1zM999 854h1v1h-1zM999 832h1v1h-1zM999 810h1v1h-1zM999 788h1v1h-1zM999 766h1v1h-1zM1021 919h1v1h-1zM1021 897h1v1h-1zM1021 876h1v1h-1zM1021 854h1v1h-1zM1021 832h1v1h-1zM1021 810h1v1h-1zM1021 788h1v1h-1zM1021 766h1v1h-1zM1043 919h1v1h-1zM1043 897h1v1h-1zM1043 876h1v1h-1zM1043 854h1v1h-1zM1043 832h1v1h-1zM1043 810h1v1h-1zM1043 788h1v1h-1zM1043 766h1v1h-1zM1064 919h1v1h-1zM1064 897h1v1h-1zM1064 876h1v1h-1zM1064 854h1v1h-1zM1064 832h1v1h-1zM1064 810h1v1h-1zM1064 788h1v1h-1zM1064 766h1v1h-1zM1086 919h1v1h-1zM1086 897h1v1h-1zM1086 876h1v1h-1zM1086 854h1v1h-1zM1086 832h1v1h-1zM1086 810h1v1h-1zM1086 788h1v1h-1zM1086 766h1v1h-1zM1108 919h1v1h-1zM1108 897h1v1h-1zM1108 876h1v1h-1zM1108 854h1v1h-1zM1108 832h1v1h-1zM1108 810h1v1h-1zM1108 788h1v1h-1zM1108 766h1v1h-1zM1130 919h1v1h-1zM1130 897h1v1h-1zM1130 876h1v1h-1zM1130 854h1v1h-1zM1130 832h1v1h-1zM1130 810h1v1h-1zM1130 788h1v1h-1zM1130 766h1v1h-1zM1152 919h1v1h-1zM1152 897h1v1h-1zM1152 876h1v1h-1zM1152 854h1v1h-1zM1152 832h1v1h-1zM1152 810h1v1h-1zM1152 788h1v1h-1zM1152 766h1v1h-1zM1174 919h1v1h-1zM1174 897h1v1h-1zM1174 876h1v1h-1zM1174 854h1v1h-1zM1174 832h1v1h-1zM1174 810h1v1h-1zM1174 788h1v1h-1zM1174 766h1v1h-1zM1196 919h1v1h-1zM1196 897h1v1h-1zM1196 876h1v1h-1zM1196 854h1v1h-1zM1196 832h1v1h-1zM1196 810h1v1h-1zM1196 788h1v1h-1zM1196 766h1v1h-1zM1196 744h1v1h-1zM1196 723h1v1h-1zM1196 701h1v1h-1zM1196 679h1v1h-1zM1196 657h1v1h-1zM1196 635h1v1h-1zM1196 613h1v1h-1zM1196 591h1v1h-1zM1196 570h1v1h-1zM1196 548h1v1h-1zM1196 526h1v1h-1zM1196 504h1v1h-1zM1196 482h1v1h-1zM1196 460h1v1h-1zM1196 439h1v1h-1zM1196 417h1v1h-1zM1196 395h1v1h-1zM1196 373h1v1h-1zM1196 351h1v1h-1zM1196 329h1v1h-1zM1196 307h1v1h-1zM1196 286h1v1h-1zM1196 264h1v1h-1zM1196 242h1v1h-1zM1196 220h1v1h-1zM1196 198h1v1h-1zM1217 919h1v1h-1zM1217 897h1v1h-1zM1217 876h1v1h-1zM1217 854h1v1h-1zM1217 832h1v1h-1zM1217 810h1v1h-1zM1217 788h1v1h-1zM1217 766h1v1h-1zM1217 744h1v1h-1zM1217 723h1v1h-1zM1217 701h1v1h-1zM1217 679h1v1h-1zM1217 657h1v1h-1zM1217 635h1v1h-1zM1217 613h1v1h-1zM1217 591h1v1h-1zM1217 570h1v1h-1zM1217 548h1v1h-1zM1217 526h1v1h-1zM1217 504h1v1h-1zM1217 482h1v1h-1zM1217 460h1v1h-1zM1217 439h1v1h-1zM1217 417h1v1h-1zM1217 395h1v1h-1zM1217 373h1v1h-1zM1217 351h1v1h-1zM1217 329h1v1h-1zM1217 307h1v1h-1zM1217 286h1v1h-1zM1217 264h1v1h-1zM1217 242h1v1h-1zM1217 220h1v1h-1zM1217 198h1v1h-1zM1239 919h1v1h-1zM1239 897h1v1h-1zM1239 876h1v1h-1zM1239 854h1v1h-1zM1239 832h1v1h-1zM1239 810h1v1h-1zM1239 788h1v1h-1zM1239 766h1v1h-1zM1239 744h1v1h-1zM1239 723h1v1h-1zM1239 701h1v1h-1zM1239 679h1v1h-1zM1239 657h1v1h-1zM1239 635h1v1h-1zM1239 613h1v1h-1zM1239 591h1v1h-1zM1239 570h1v1h-1zM1239 548h1v1h-1zM1239 526h1v1h-1zM1239 504h1v1h-1zM1239 482h1v1h-1zM1239 460h1v1h-1zM1239 439h1v1h-1zM1239 417h1v1h-1zM1239 395h1v1h-1zM1239 373h1v1h-1zM1239 351h1v1h-1zM1239 329h1v1h-1zM1239 307h1v1h-1zM1239 286h1v1h-1zM1239 264h1v1h-1zM1239 242h1v1h-1zM1239 220h1v1h-1zM1239 198h1v1h-1zM1261 919h1v1h-1zM1261 897h1v1h-1zM1261 876h1v1h-1zM1261 854h1v1h-1zM1261 832h1v1h-1zM1261 810h1v1h-1zM1261 788h1v1h-1zM1261 766h1v1h-1zM1261 744h1v1h-1zM1261 723h1v1h-1zM1261 701h1v1h-1zM1261 679h1v1h-1zM1261 657h1v1h-1zM1261 635h1v1h-1zM1261 613h1v1h-1zM1261 591h1v1h-1zM1261 570h1v1h-1zM1261 548h1v1h-1zM1261 526h1v1h-1zM1261 504h1v1h-1zM1261 482h1v1h-1zM1261 460h1v1h-1zM1261 439h1v1h-1zM1261 417h1v1h-1zM1261 395h1v1h-1zM1261 373h1v1h-1zM1261 351h1v1h-1zM1261 329h1v1h-1zM1261 307h1v1h-1zM1261 286h1v1h-1zM1261 264h1v1h-1zM1261 242h1v1h-1zM1261 220h1v1h-1zM1261 198h1v1h-1zM1283 919h1v1h-1zM1283 897h1v1h-1zM1283 876h1v1h-1zM1283 854h1v1h-1zM1283 832h1v1h-1zM1283 810h1v1h-1zM1283 788h1v1h-1zM1283 766h1v1h-1zM1283 744h1v1h-1zM1283 723h1v1h-1zM1283 701h1v1h-1zM1283 679h1v1h-1zM1283 657h1v1h-1zM1283 635h1v1h-1zM1283 613h1v1h-1zM1283 591h1v1h-1zM1283 570h1v1h-1zM1283 548h1v1h-1zM1283 526h1v1h-1zM1283 504h1v1h-1zM1283 482h1v1h-1zM1283 460h1v1h-1zM1283 439h1v1h-1zM1283 417h1v1h-1zM1283 395h1v1h-1zM1283 373h1v1h-1zM1283 351h1v1h-1zM1283 329h1v1h-1zM1283 307h1v1h-1zM1283 286h1v1h-1zM1283 264h1v1h-1zM1283 242h1v1h-1zM1283 220h1v1h-1zM1283 198h1v1h-1zM1305 919h1v1h-1zM1305 897h1v1h-1zM1305 876h1v1h-1zM1305 854h1v1h-1zM1305 832h1v1h-1zM1305 810h1v1h-1zM1305 788h1v1h-1zM1305 766h1v1h-1zM1305 744h1v1h-1zM1305 723h1v1h-1zM1305 701h1v1h-1zM1305 679h1v1h-1zM1305 657h1v1h-1zM1305 635h1v1h-1zM1305 613h1v1h-1zM1305 591h1v1h-1zM1305 570h1v1h-1zM1305 548h1v1h-1zM1305 526h1v1h-1zM1305 504h1v1h-1zM1305 482h1v1h-1zM1305 460h1v1h-1zM1305 439h1v1h-1zM1305 417h1v1h-1zM1305 395h1v1h-1zM1305 373h1v1h-1zM1305 351h1v1h-1zM1305 329h1v1h-1zM1305 307h1v1h-1zM1305 286h1v1h-1zM1305 264h1v1h-1zM1305 242h1v1h-1zM1305 220h1v1h-1zM1305 198h1v1h-1zM1327 919h1v1h-1zM1327 897h1v1h-1zM1327 876h1v1h-1zM1327 854h1v1h-1zM1327 832h1v1h-1zM1327 810h1v1h-1zM1327 788h1v1h-1zM1327 766h1v1h-1zM1327 744h1v1h-1zM1327 723h1v1h-1zM1327 701h1v1h-1zM1327 679h1v1h-1zM1327 657h1v1h-1zM1327 635h1v1h-1zM1327 613h1v1h-1zM1327 591h1v1h-1zM1327 570h1v1h-1zM1327 548h1v1h-1zM1327 526h1v1h-1zM1327 504h1v1h-1zM1327 482h1v1h-1zM1327 460h1v1h-1zM1327 439h1v1h-1zM1327 417h1v1h-1zM1327 395h1v1h-1zM1327 373h1v1h-1zM1327 351h1v1h-1zM1327 329h1v1h-1zM1327 307h1v1h-1zM1327 286h1v1h-1zM1327 264h1v1h-1zM1327 242h1v1h-1zM1327 220h1v1h-1zM1327 198h1v1h-1zM1349 919h1v1h-1zM1349 897h1v1h-1zM1349 876h1v1h-1zM1349 854h1v1h-1zM1349 832h1v1h-1zM1349 810h1v1h-1zM1349 788h1v1h-1zM1349 766h1v1h-1zM1349 744h1v1h-1zM1349 723h1v1h-1zM1349 701h1v1h-1zM1349 679h1v1h-1zM1349 657h1v1h-1zM1349 635h1v1h-1zM1349 613h1v1h-1zM1349 591h1v1h-1zM1349 570h1v1h-1zM1349 548h1v1h-1zM1349 526h1v1h-1zM1349 504h1v1h-1zM1349 482h1v1h-1zM1349 460h1v1h-1zM1349 439h1v1h-1zM1349 417h1v1h-1zM1349 395h1v1h-1zM1349 373h1v1h-1zM1349 351h1v1h-1zM1349 329h1v1h-1zM1349 307h1v1h-1zM1349 286h1v1h-1zM1349 264h1v1h-1zM1349 242h1v1h-1zM1349 220h1v1h-1zM1349 198h1v1h-1zM1370 919h1v1h-1zM1370 897h1v1h-1zM1370 876h1v1h-1zM1370 854h1v1h-1zM1370 832h1v1h-1zM1370 810h1v1h-1zM1370 788h1v1h-1zM1370 766h1v1h-1zM1370 744h1v1h-1zM1370 723h1v1h-1zM1370 701h1v1h-1zM1370 679h1v1h-1zM1370 657h1v1h-1zM1370 635h1v1h-1zM1370 613h1v1h-1zM1370 591h1v1h-1zM1370 570h1v1h-1zM1370 548h1v1h-1zM1370 526h1v1h-1zM1370 504h1v1h-1zM1370 482h1v1h-1zM1370 460h1v1h-1zM1370 439h1v1h-1zM1370 417h1v1h-1zM1370 395h1v1h-1zM1370 373h1v1h-1zM1370 351h1v1h-1zM1370 329h1v1h-1zM1370 307h1v1h-1zM1370 286h1v1h-1zM1370 264h1v1h-1zM1370 242h1v1h-1zM1370 220h1v1h-1zM1370 198h1v1h-1zM1392 919h1v1h-1zM1392 897h1v1h-1zM1392 876h1v1h-1zM1392 854h1v1h-1zM1392 832h1v1h-1zM1392 810h1v1h-1zM1392 788h1v1h-1zM1392 766h1v1h-1zM1392 744h1v1h-1zM1392 723h1v1h-1zM1392 701h1v1h-1zM1392 679h1v1h-1zM1392 657h1v1h-1zM1392 635h1v1h-1zM1392 613h1v1h-1zM1392 591h1v1h-1zM1392 570h1v1h-1zM1392 548h1v1h-1zM1392 526h1v1h-1zM1392 504h1v1h-1zM1392 482h1v1h-1zM1392 460h1v1h-1zM1392 439h1v1h-1zM1392 417h1v1h-1zM1392 395h1v1h-1zM1392 373h1v1h-1zM1392 351h1v1h-1zM1392 329h1v1h-1zM1392 307h1v1h-1zM1392 286h1v1h-1zM1392 264h1v1h-1zM1392 242h1v1h-1zM1392 220h1v1h-1zM1392 198h1v1h-1zM1414 919h1v1h-1zM1414 897h1v1h-1zM1414 876h1v1h-1zM1414 854h1v1h-1zM1414 832h1v1h-1zM1414 810h1v1h-1zM1414 788h1v1h-1zM1414 766h1v1h-1zM1414 744h1v1h-1zM1414 723h1v1h-1zM1414 701h1v1h-1zM1414 679h1v1h-1zM1414 657h1v1h-1zM1414 635h1v1h-1zM1414 613h1v1h-1zM1414 591h1v1h-1zM1414 570h1v1h-1zM1414 548h1v1h-1zM1414 526h1v1h-1zM1414 504h1v1h-1zM1414 482h1v1h-1zM1414 460h1v1h-1zM1414 439h1v1h-1zM1414 417h1v1h-1zM1414 395h1v1h-1zM1414 373h1v1h-1zM1414 351h1v1h-1zM1414 329h1v1h-1zM1414 307h1v1h-1zM1414 286h1v1h-1zM1414 264h1v1h-1zM1414 242h1v1h-1zM1414 220h1v1h-1zM1414 198h1v1h-1zM1436 919h1v1h-1zM1436 897h1v1h-1zM1436 876h1v1h-1zM1436 854h1v1h-1zM1436 832h1v1h-1zM1436 810h1v1h-1zM1436 788h1v1h-1zM1436 766h1v1h-1zM1436 744h1v1h-1zM1436 723h1v1h-1zM1436 701h1v1h-1zM1436 679h1v1h-1zM1436 657h1v1h-1zM1436 635h1v1h-1zM1436 613h1v1h-1zM1436 591h1v1h-1zM1436 570h1v1h-1zM1436 548h1v1h-1zM1436 526h1v1h-1zM1436 504h1v1h-1zM1436 482h1v1h-1zM1436 460h1v1h-1zM1436 439h1v1h-1zM1436 417h1v1h-1zM1436 395h1v1h-1zM1436 373h1v1h-1zM1436 351h1v1h-1zM1436 329h1v1h-1zM1436 307h1v1h-1zM1436 286h1v1h-1zM1436 264h1v1h-1zM1436 242h1v1h-1zM1436 220h1v1h-1zM1436 198h1v1h-1zM1458 919h1v1h-1zM1458 897h1v1h-1zM1458 876h1v1h-1zM1458 854h1v1h-1zM1458 832h1v1h-1zM1458 810h1v1h-1zM1458 788h1v1h-1zM1458 766h1v1h-1zM1458 744h1v1h-1zM1458 723h1v1h-1zM1458 701h1v1h-1zM1458 679h1v1h-1zM1458 657h1v1h-1zM1458 635h1v1h-1zM1458 613h1v1h-1zM1458 591h1v1h-1zM1458 570h1v1h-1zM1458 548h1v1h-1zM1458 526h1v1h-1zM1458 504h1v1h-1zM1458 482h1v1h-1zM1458 460h1v1h-1zM1458 439h1v1h-1zM1458 417h1v1h-1zM1458 395h1v1h-1zM1458 373h1v1h-1zM1458 351h1v1h-1zM1458 329h1v1h-1zM1458 307h1v1h-1zM1458 286h1v1h-1zM1458 264h1v1h-1zM1458 242h1v1h-1zM1458 220h1v1h-1zM1458 198h1v1h-1zM1480 919h1v1h-1zM1480 897h1v1h-1zM1480 876h1v1h-1zM1480 854h1v1h-1zM1480 832h1v1h-1zM1480 810h1v1h-1zM1480 788h1v1h-1zM1480 766h1v1h-1zM1480 744h1v1h-1zM1480 723h1v1h-1zM1480 701h1v1h-1zM1480 679h1v1h-1zM1480 657h1v1h-1zM1480 635h1v1h-1zM1480 613h1v1h-1zM1480 591h1v1h-1zM1480 570h1v1h-1zM1480 548h1v1h-1zM1480 526h1v1h-1zM1480 504h1v1h-1zM1480 482h1v1h-1zM1480 460h1v1h-1zM1480 439h1v1h-1zM1480 417h1v1h-1zM1480 395h1v1h-1zM1480 373h1v1h-1zM1480 351h1v1h-1zM1480 329h1v1h-1zM1480 307h1v1h-1zM1480 286h1v1h-1zM1480 264h1v1h-1zM1480 242h1v1h-1zM1480 220h1v1h-1zM1480 198h1v1h-1zM1501 919h1v1h-1zM1501 897h1v1h-1zM1501 876h1v1h-1zM1501 854h1v1h-1zM1501 832h1v1h-1zM1501 810h1v1h-1zM1501 788h1v1h-1zM1501 766h1v1h-1zM1501 744h1v1h-1zM1501 723h1v1h-1zM1501 701h1v1h-1zM1501 679h1v1h-1zM1501 657h1v1h-1zM1501 635h1v1h-1zM1501 613h1v1h-1zM1501 591h1v1h-1zM1501 570h1v1h-1zM1501 548h1v1h-1zM1501 526h1v1h-1zM1501 504h1v1h-1zM1501 482h1v1h-1zM1501 460h1v1h-1zM1501 439h1v1h-1zM1501 417h1v1h-1zM1501 395h1v1h-1zM1501 373h1v1h-1zM1501 351h1v1h-1zM1501 329h1v1h-1zM1501 307h1v1h-1zM1501 286h1v1h-1zM1501 264h1v1h-1zM1501 242h1v1h-1zM1501 220h1v1h-1zM1501 198h1v1h-1zM1523 919h1v1h-1zM1523 897h1v1h-1zM1523 876h1v1h-1zM1523 854h1v1h-1zM1523 832h1v1h-1zM1523 810h1v1h-1zM1523 788h1v1h-1zM1523 766h1v1h-1zM1523 744h1v1h-1zM1523 723h1v1h-1zM1523 701h1v1h-1zM1523 679h1v1h-1zM1523 657h1v1h-1zM1523 635h1v1h-1zM1523 613h1v1h-1zM1523 591h1v1h-1zM1523 570h1v1h-1zM1523 548h1v1h-1zM1523 526h1v1h-1zM1523 504h1v1h-1zM1523 482h1v1h-1zM1523 460h1v1h-1zM1523 439h1v1h-1zM1523 417h1v1h-1zM1523 395h1v1h-1zM1523 373h1v1h-1zM1523 351h1v1h-1zM1523 329h1v1h-1zM1523 307h1v1h-1zM1523 286h1v1h-1zM1523 264h1v1h-1zM1523 242h1v1h-1zM1523 220h1v1h-1zM1523 198h1v1h-1zM1545 919h1v1h-1zM1545 897h1v1h-1zM1545 876h1v1h-1zM1545 854h1v1h-1zM1545 832h1v1h-1zM1545 810h1v1h-1zM1545 788h1v1h-1zM1545 766h1v1h-1zM1545 744h1v1h-1zM1545 723h1v1h-1zM1545 701h1v1h-1zM1545 679h1v1h-1zM1545 657h1v1h-1zM1545 635h1v1h-1zM1545 613h1v1h-1zM1545 591h1v1h-1zM1545 570h1v1h-1zM1545 548h1v1h-1zM1545 526h1v1h-1zM1545 504h1v1h-1zM1545 482h1v1h-1zM1545 460h1v1h-1zM1545 439h1v1h-1zM1545 417h1v1h-1zM1545 395h1v1h-1zM1545 373h1v1h-1zM1545 351h1v1h-1zM1545 329h1v1h-1zM1545 307h1v1h-1zM1545 286h1v1h-1zM1545 264h1v1h-1zM1545 242h1v1h-1zM1545 220h1v1h-1zM1545 198h1v1h-1zM1567 919h1v1h-1zM1567 897h1v1h-1zM1567 876h1v1h-1zM1567 854h1v1h-1zM1567 832h1v1h-1zM1567 810h1v1h-1zM1567 788h1v1h-1zM1567 766h1v1h-1zM1567 744h1v1h-1zM1567 723h1v1h-1zM1567 701h1v1h-1zM1567 679h1v1h-1zM1567 657h1v1h-1zM1567 635h1v1h-1zM1567 613h1v1h-1zM1567 591h1v1h-1zM1567 570h1v1h-1zM1567 548h1v1h-1zM1567 526h1v1h-1zM1567 504h1v1h-1zM1567 482h1v1h-1zM1567 460h1v1h-1zM1567 439h1v1h-1zM1567 417h1v1h-1zM1567 395h1v1h-1zM1567 373h1v1h-1zM1567 351h1v1h-1zM1567 329h1v1h-1zM1567 307h1v1h-1zM1567 286h1v1h-1zM1567 264h1v1h-1zM1567 242h1v1h-1zM1567 220h1v1h-1zM1567 198h1v1h-1zM1589 919h1v1h-1zM1589 897h1v1h-1zM1589 876h1v1h-1zM1589 854h1v1h-1zM1589 832h1v1h-1zM1589 810h1v1h-1zM1589 788h1v1h-1zM1589 766h1v1h-1zM1589 744h1v1h-1zM1589 723h1v1h-1zM1589 701h1v1h-1zM1589 679h1v1h-1zM1589 657h1v1h-1zM1589 635h1v1h-1zM1589 613h1v1h-1zM1589 591h1v1h-1zM1589 570h1v1h-1zM1589 548h1v1h-1zM1589 526h1v1h-1zM1589 504h1v1h-1zM1589 482h1v1h-1zM1589 460h1v1h-1zM1589 439h1v1h-1zM1589 417h1v1h-1zM1589 395h1v1h-1zM1589 373h1v1h-1zM1589 351h1v1h-1zM1589 329h1v1h-1zM1589 307h1v1h-1zM1589 286h1v1h-1zM1589 264h1v1h-1zM1589 242h1v1h-1zM1589 220h1v1h-1zM1589 198h1v1h-1z" fill="#bcbcbc"/></svg>
<svg width="1627" height="200" style="position:absolute;left:0;top:0;pointer-events:none"><g><circle cx="6.5" cy="14" r="6.00" fill="#f6f6fa" stroke="#34478a" stroke-width="2.25"/><path d="M2.4 14.0h8.2M6.5 9.9v8.2M3.5 11.0l6.0 6.0" stroke="#b8b8c8" stroke-width="0.6"/><path d="M6.9 14.4L12.5 20.4" stroke="#e8c030" stroke-width="2.40" stroke-linecap="round"/><path d="M12.1 20.0L14.0 21.9" stroke="#c07868" stroke-width="2.25" stroke-linecap="round"/></g><g><circle cx="102" cy="146.5" r="5.76" fill="#f6f6fa" stroke="#34478a" stroke-width="2.16"/><path d="M98.0 146.5h7.9M102.0 142.5v7.9M99.1 143.6l5.8 5.8" stroke="#b8b8c8" stroke-width="0.6"/><path d="M102.4 146.9L107.8 152.6" stroke="#e8c030" stroke-width="2.30" stroke-linecap="round"/><path d="M107.4 152.3L109.2 154.1" stroke="#c07868" stroke-width="2.16" stroke-linecap="round"/></g><g><circle cx="869.5" cy="146" r="5.76" fill="#f6f6fa" stroke="#34478a" stroke-width="2.16"/><path d="M865.5 146.0h7.9M869.5 142.0v7.9M866.6 143.1l5.8 5.8" stroke="#b8b8c8" stroke-width="0.6"/><path d="M869.9 146.4L875.3 152.1" stroke="#e8c030" stroke-width="2.30" stroke-linecap="round"/><path d="M874.9 151.8L876.7 153.6" stroke="#c07868" stroke-width="2.16" stroke-linecap="round"/></g><rect x="812.5" y="141.5" width="13" height="13" rx="2" fill="#bababa" stroke="#9c9c9c"/><path d="M816 145l6 6M822 145l-6 6" stroke="#fff" stroke-width="1.8"/><rect x="1580.5" y="140.5" width="13.5" height="13" rx="2" fill="#e06a4a" stroke="#c85838"/><path d="M1584 144l6.5 6M1590.5 144l-6.5 6" stroke="#fff" stroke-width="2"/></svg>
<svg width="1489" height="739" viewBox="103 187 1489 739" style="position:absolute;left:103px;top:187px"><path d="M430.5 854.5V896M409.5 875.5H451" stroke="#a82020" stroke-width="1" shape-rendering="crispEdges"/><path d="M428 870.5h5l2.5 2.5v5l-2.5 2.5h-5l-2.5-2.5v-5z" fill="none" stroke="#a83030" stroke-width="1"/><path d="M945.5 754.5h3M951 754.5h3M959 754.5h4M966.5 754V757" stroke="#d03030" stroke-width="1" fill="none" opacity="0.8"/><path d="M947.5 740V875.5H1086.5V740" fill="none" stroke="#50d040" stroke-width="1" shape-rendering="crispEdges"/><path d="M947.5 877V902M1086.5 877V900M947.5 897.5H1086.5M1087 875.5H1112M1108.5 740V876" fill="none" stroke="#d02020" stroke-width="1" shape-rendering="crispEdges"/><path d="M948 897.5l5-1.2v2.4zM1086 897.5l-5-1.2v2.4zM1108.5 875l-1.2-5h2.4z" fill="#e02020"/><g transform="translate(1009.5 889)" fill="none" stroke="#e02828" stroke-width="1"><path transform="translate(0 0)" d="M3.5 0.5H1.5L0.5 1.5V7L1.2 7.7H2.8L3.5 7V5L2.8 4.3H0.5"/><path transform="translate(5 0)" d="M0.5 0.5H2.8L3.5 1.2V3.3L2.8 4H1.5M2.8 4L3.5 4.7V7L2.8 7.7H0.5"/><path transform="translate(10 0)" d="M3.5 0.5H1.5L0.5 1.5V7L1.2 7.7H2.8L3.5 7V5L2.8 4.3H0.5"/></g><g transform="translate(1099 789.5) rotate(-90)" fill="none" stroke="#e02828" stroke-width="1"><path transform="translate(0 0)" d="M1.2 0.5H2.8L3.5 1.2V3.3L2.8 4H1.2L0.5 3.3V1.2ZM1.2 4L0.5 4.7V7L1.2 7.7H2.8L3.5 7V4.7L2.8 4"/><path transform="translate(5 0)" d="M3.5 0.5H1.5L0.5 1.5V7L1.2 7.7H2.8L3.5 7V5L2.8 4.3H0.5"/><path transform="translate(10 0)" d="M1.2 0.5H2.8L3.5 1.2V7L2.8 7.7H1.2L0.5 7V1.2Z"/></g><path d="M947.5 813.5V802.5H951.5L953.5 804.5V807.0L951.5 809.0H947.5M957.5 813.5L961.0 802.5L964.5 813.5M958.3 810.5H963.7M967.5 802.5H975.5M971.5 802.5V813.5M978.5 802.5H986.5M982.5 802.5V813.5M994.5 802.5H989.5V813.5H994.5M989.5 807.5H993.3M998.5 813.5V802.5H1002.5L1004.5 804.5V806.0L1002.5 808.0H998.5M1001.5 808.0L1004.5 813.5M1007.5 813.5V802.5L1014.5 813.5V802.5M1028.5 803.5L1027.5 802.5H1023.0L1021.5 804.0V806.0L1023.0 807.5H1027.0L1028.5 809.0V812.0L1027.0 813.5H1023.0L1021.5 812.0M1031.5 802.5V813.5M1035.5 802.5V813.5H1039.0L1041.5 811.0V805.0L1039.0 802.5ZM1050.5 802.5H1045.5V813.5H1050.5M1045.5 807.5H1049.3M1058.5 802.5V811.5L1060.0 813.5H1063.0L1064.5 811.5V802.5M1068.5 813.5V802.5H1072.5L1074.5 804.5V807.0L1072.5 809.0H1068.5" fill="none" stroke="#f2f2f2" stroke-width="1"/></svg>
<div class="a" style="left:78px;top:161px;width:1514px;height:26px;background:#f0f0f0"></div>
<svg width="1489" height="26" viewBox="103 161 1489 26" style="position:absolute;left:103px;top:161px;overflow:hidden"><path d="M103 180h1v7h-1zM124 184h1v3h-1zM146 184h1v3h-1zM168 184h1v3h-1zM190 184h1v3h-1zM212 180h1v7h-1zM234 184h1v3h-1zM256 184h1v3h-1zM277 184h1v3h-1zM299 184h1v3h-1zM321 180h1v7h-1zM343 184h1v3h-1zM365 184h1v3h-1zM387 184h1v3h-1zM408 184h1v3h-1zM430 180h1v7h-1zM452 184h1v3h-1zM474 184h1v3h-1zM496 184h1v3h-1zM518 184h1v3h-1zM540 180h1v7h-1zM561 184h1v3h-1zM583 184h1v3h-1zM605 184h1v3h-1zM627 184h1v3h-1zM649 180h1v7h-1zM671 184h1v3h-1zM693 184h1v3h-1zM714 184h1v3h-1zM736 184h1v3h-1zM758 180h1v7h-1zM780 184h1v3h-1zM802 184h1v3h-1zM824 184h1v3h-1zM845 184h1v3h-1zM867 180h1v7h-1zM889 184h1v3h-1zM911 184h1v3h-1zM933 184h1v3h-1zM955 184h1v3h-1zM977 180h1v7h-1zM998 184h1v3h-1zM1020 184h1v3h-1zM1042 184h1v3h-1zM1064 184h1v3h-1zM1086 180h1v7h-1zM1108 184h1v3h-1zM1130 184h1v3h-1zM1151 184h1v3h-1zM1173 184h1v3h-1zM1195 180h1v7h-1zM1217 184h1v3h-1zM1239 184h1v3h-1zM1261 184h1v3h-1zM1282 184h1v3h-1zM1304 180h1v7h-1zM1326 184h1v3h-1zM1348 184h1v3h-1zM1370 184h1v3h-1zM1392 184h1v3h-1zM1414 180h1v7h-1zM1435 184h1v3h-1zM1457 184h1v3h-1zM1479 184h1v3h-1zM1501 184h1v3h-1zM1523 180h1v7h-1zM1545 184h1v3h-1zM1567 184h1v3h-1zM1588 184h1v3h-1z" fill="#000" shape-rendering="crispEdges"/><text x="102.3" y="176" font-size="14.5" text-anchor="middle" font-family="Liberation Sans" fill="#000" letter-spacing="-0.3">-1500</text><text x="211.5" y="176" font-size="14.5" text-anchor="middle" font-family="Liberation Sans" fill="#000" letter-spacing="-0.3">-1000</text><text x="320.8" y="176" font-size="14.5" text-anchor="middle" font-family="Liberation Sans" fill="#000" letter-spacing="-0.3">-500</text><text x="430.0" y="176" font-size="14.5" text-anchor="middle" font-family="Liberation Sans" fill="#000" letter-spacing="-0.3">0</text><text x="539.2" y="176" font-size="14.5" text-anchor="middle" font-family="Liberation Sans" fill="#000" letter-spacing="-0.3">500</text><text x="648.5" y="176" font-size="14.5" text-anchor="middle" font-family="Liberation Sans" fill="#000" letter-spacing="-0.3">1000</text><text x="757.8" y="176" font-size="14.5" text-anchor="middle" font-family="Liberation Sans" fill="#000" letter-spacing="-0.3">1500</text><text x="867.0" y="176" font-size="14.5" text-anchor="middle" font-family="Liberation Sans" fill="#000" letter-spacing="-0.3">2000</text><text x="976.2" y="176" font-size="14.5" text-anchor="middle" font-family="Liberation Sans" fill="#000" letter-spacing="-0.3">2500</text><text x="1085.5" y="176" font-size="14.5" text-anchor="middle" font-family="Liberation Sans" fill="#000" letter-spacing="-0.3">3000</text><text x="1194.8" y="176" font-size="14.5" text-anchor="middle" font-family="Liberation Sans" fill="#000" letter-spacing="-0.3">3500</text><text x="1304.0" y="176" font-size="14.5" text-anchor="middle" font-family="Liberation Sans" fill="#000" letter-spacing="-0.3">4000</text><text x="1413.2" y="176" font-size="14.5" text-anchor="middle" font-family="Liberation Sans" fill="#000" letter-spacing="-0.3">4500</text><text x="1522.5" y="176" font-size="14.5" text-anchor="middle" font-family="Liberation Sans" fill="#000" letter-spacing="-0.3">5000</text><text x="1631.8" y="176" font-size="14.5" text-anchor="middle" font-family="Liberation Sans" fill="#000" letter-spacing="-0.3">5500</text><path d="M109 180.5h5.5l-2.75 3z" fill="#000"/></svg>
<svg width="25" height="739" viewBox="78 187 25 739" style="position:absolute;left:78px;top:187px;overflow:hidden"><path d="M100 919h3v1h-3zM100 897h3v1h-3zM96 875h7v1h-7zM100 853h3v1h-3zM100 831h3v1h-3zM100 809h3v1h-3zM100 788h3v1h-3zM96 766h7v1h-7zM100 744h3v1h-3zM100 722h3v1h-3zM100 700h3v1h-3zM100 678h3v1h-3zM96 657h7v1h-7zM100 635h3v1h-3zM100 613h3v1h-3zM100 591h3v1h-3zM100 569h3v1h-3zM96 547h7v1h-7zM100 525h3v1h-3zM100 504h3v1h-3zM100 482h3v1h-3zM100 460h3v1h-3zM96 438h7v1h-7zM100 416h3v1h-3zM100 394h3v1h-3zM100 372h3v1h-3zM100 351h3v1h-3zM96 329h7v1h-7zM100 307h3v1h-3zM100 285h3v1h-3zM100 263h3v1h-3zM100 241h3v1h-3zM96 220h7v1h-7zM100 198h3v1h-3z" fill="#000" shape-rendering="crispEdges"/><text transform="translate(92 985.2) rotate(-90)" x="0" y="0" font-size="14.5" text-anchor="middle" font-family="Liberation Sans" fill="#000" letter-spacing="-0.3">-500</text><text transform="translate(92 876.0) rotate(-90)" x="0" y="0" font-size="14.5" text-anchor="middle" font-family="Liberation Sans" fill="#000" letter-spacing="-0.3">0</text><text transform="translate(92 766.8) rotate(-90)" x="0" y="0" font-size="14.5" text-anchor="middle" font-family="Liberation Sans" fill="#000" letter-spacing="-0.3">500</text><text transform="translate(92 657.5) rotate(-90)" x="0" y="0" font-size="14.5" text-anchor="middle" font-family="Liberation Sans" fill="#000" letter-spacing="-0.3">1000</text><text transform="translate(92 548.2) rotate(-90)" x="0" y="0" font-size="14.5" text-anchor="middle" font-family="Liberation Sans" fill="#000" letter-spacing="-0.3">1500</text><text transform="translate(92 439.0) rotate(-90)" x="0" y="0" font-size="14.5" text-anchor="middle" font-family="Liberation Sans" fill="#000" letter-spacing="-0.3">2000</text><text transform="translate(92 329.8) rotate(-90)" x="0" y="0" font-size="14.5" text-anchor="middle" font-family="Liberation Sans" fill="#000" letter-spacing="-0.3">2500</text><text transform="translate(92 220.5) rotate(-90)" x="0" y="0" font-size="14.5" text-anchor="middle" font-family="Liberation Sans" fill="#000" letter-spacing="-0.3">3000</text><text transform="translate(92 111.2) rotate(-90)" x="0" y="0" font-size="14.5" text-anchor="middle" font-family="Liberation Sans" fill="#000" letter-spacing="-0.3">3500</text><path d="M96 327h7v7z" fill="none"/><path d="M95.5 326.5l7 3.5-7 3.5z" fill="#000"/></svg>
<div class="a" style="left:1601px;top:444px;width:3px;height:225px;background:#868686;border-radius:2px"></div>
<div class="a" style="left:341px;top:935px;width:947px;height:3px;background:#868686;border-radius:2px"></div>
<div class="t" style="left:1547px;top:931px;font-size:13px;color:#000">100 &lt; 1000</div>
<div class="a" style="left:78px;top:952px;width:1514px;height:38px;background:#fff;overflow:hidden"><div class="a" style="left:46px;top:0;width:4px;height:1.5px;background:#222"></div><div class="a" style="left:160px;top:0;width:1px;height:1.5px;background:#222"></div><div class="a" style="left:186px;top:0;width:1px;height:1.5px;background:#222"></div><div class="a" style="left:265px;top:0;width:1px;height:1.5px;background:#222"></div><div class="a" style="left:354px;top:0;width:1px;height:1.5px;background:#222"></div><div class="a" style="left:448px;top:0;width:4px;height:1.5px;background:#222"></div><div class="t" style="left:4px;top:4px;font-size:13px;color:#000">Format: R24 [2010] DWG Drawing [OpenDesign] (*.dwg)</div><div class="t" style="left:5px;top:21px;font-size:13px;color:#1f1f8f"><i>Command:</i> saveas</div></div>
<div class="a" style="left:78px;top:989px;width:1534px;height:2px;background:#a8a8a8"></div>
<div class="a" style="left:1612px;top:952px;width:1px;height:66px;background:#8a8a8a"></div>
<div class="t" style="left:79px;top:1000px;font-size:13px;color:#000">Command:</div>
<div class="a" style="left:145px;top:996px;width:1447px;height:21px;background:#fff"></div>
<div class="a" style="left:1587px;top:995px;width:23px;height:22px;background:#fff;border:1px solid #dcdcdc;border-radius:4px"></div>
<div class="a" style="left:1589px;top:1000px;width:18px;height:12px;border:1px solid #222;border-top:3px solid #111;background:#f8f8f8"></div>
<div class="a" style="left:0;top:1018px;width:1627px;height:4px;background:#3a3a3a"></div>
<div class="a" style="left:1618px;top:185px;width:1px;height:833px;background:#8c8c8c"></div>
<div class="a" style="left:1619px;top:185px;width:8px;height:833px;background:#fff"></div>
<div class="a" style="left:1618px;top:134px;width:12px;height:23px;background:#d9d9d9;border:1px solid #bdbdbd"></div>
<div class="t" style="left:1621px;top:138px;font-size:14px;color:#000">L</div>
<div class="a" style="left:1619px;top:161px;width:12px;height:23px;background:#fff;border:1px solid #d0d0d0;border-radius:4px"></div>
<div class="a" style="left:248px;top:164px;width:942px;height:590px;border-radius:8px;background:#fff;overflow:hidden;box-shadow:0 0 0 1px rgba(0,0,0,0.3),0 3px 14px rgba(0,0,0,0.2)"><div class="a" style="left:0;top:0;width:942px;height:37px;background:#f9f0eb"></div><div class="t" style="left:37px;top:11.5px;font-size:14px;color:#000">Save As</div><div class="a" style="left:0;top:513px;width:942px;height:76px;background:#f0f0f0"></div><div class="a" style="left:921px;top:569px;width:21px;height:21px;background:#fff"></div><div class="a" style="left:10px;top:543px;width:124px;height:27px;background:#fff"></div><div class="a" style="left:686px;top:536px;width:110px;height:34px;background:#fff"></div><div class="a" style="left:811px;top:536px;width:110px;height:34px;background:#fff"></div><div class="a" style="left:175px;top:141px;width:20px;height:247px;background:#efefef"></div><div class="a" style="left:183px;top:315px;width:3px;height:43px;background:#808080;border-radius:2px"></div><div class="a" style="left:200px;top:368px;width:742px;height:20px;background:#efefef"></div><div class="a" style="left:220px;top:376px;width:626px;height:3px;background:#808080;border-radius:2px"></div><div class="a" style="left:922px;top:162px;width:20px;height:184px;background:#efefef"></div><div class="a" style="left:930px;top:162px;width:3px;height:21px;background:#808080;border-radius:2px"></div><div class="a" style="left:539px;top:141px;width:1px;height:32px;background:#e3e3e3"></div><div class="a" style="left:719px;top:141px;width:1px;height:32px;background:#e3e3e3"></div><div class="a" style="left:869px;top:141px;width:1px;height:32px;background:#e3e3e3"></div><div class="t" style="left:237px;top:151px;font-size:14.5px;color:#4a5665">Name</div><div class="t" style="left:547px;top:150px;font-size:15.5px;color:#4a5665">Date modified</div><div class="t" style="left:727px;top:150px;font-size:15px;color:#4a5665">Type</div><div class="t" style="left:877px;top:150px;font-size:15px;color:#4a5665">Size</div><svg class="a" style="left:624px;top:142px" width="11" height="6"><path d="M0.5 0.5l5 4.5 5-4.5" fill="none" stroke="#555" stroke-width="1"/></svg><div class="t" style="left:522px;top:196px;font-size:14.5px;color:#6a6a6a">Working on it...</div><svg class="a" style="left:915px;top:11px" width="14" height="14"><path d="M1 1L13 13M13 1L1 13" stroke="#1a1a1a" stroke-width="1.3"/></svg></div>
<svg width="300" height="220" style="position:absolute;left:0;top:0"><g><circle cx="267" cy="182" r="6.24" fill="#f6f6fa" stroke="#34478a" stroke-width="2.34"/><path d="M262.7 182.0h8.6M267.0 177.7v8.6M263.9 178.9l6.2 6.2" stroke="#b8b8c8" stroke-width="0.6"/><path d="M267.4 182.4L273.2 188.6" stroke="#e8c030" stroke-width="2.50" stroke-linecap="round"/><path d="M272.9 188.2L274.8 190.2" stroke="#c07868" stroke-width="2.34" stroke-linecap="round"/></g></svg>
</body></html>
